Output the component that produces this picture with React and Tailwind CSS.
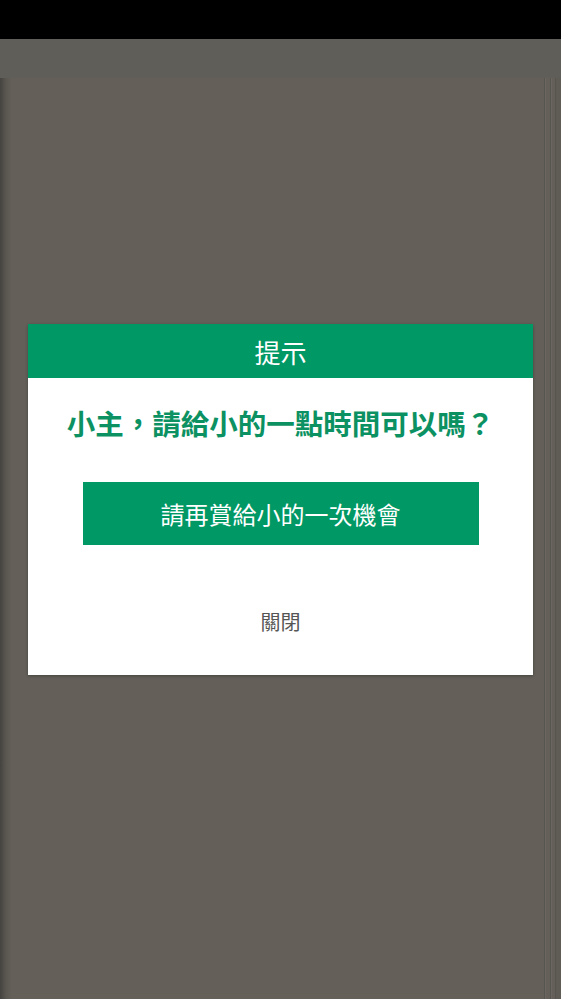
import React from 'react';

const cjk = { fontFamily: '"Noto Sans CJK TC", "Noto Sans CJK SC", "Noto Sans", sans-serif' };

export default function App() {
  return (
    <div className="relative h-[999px] w-full overflow-hidden bg-[#646059]" style={cjk}>
      {/* status bar */}
      <div className="h-[39px] bg-black" />
      {/* top bar */}
      <div className="h-[39px] bg-[#605e59]" />
      {/* page behind the dialog */}
      <div className="flex h-[921px]">
        <div className="w-[12px] bg-gradient-to-r from-[#45433f] via-[#5a5751] to-[#646059]" />
        <div className="flex-1" />
        <div className="flex w-[17px]">
          <div className="w-[1px] bg-[#57554f]" />
          <div className="w-[1px] bg-[#6b6760]" />
          <div className="w-[4px]" />
          <div className="w-[1px] bg-[#57554f]" />
          <div className="w-[1px] bg-[#6b6760]" />
          <div className="w-[3px]" />
          <div className="w-[1px] bg-[#57554f]" />
          <div className="flex-1 bg-[#5f5c56]" />
        </div>
      </div>

      {/* dialog */}
      <div className="absolute inset-0 flex items-center justify-center">
        <div className="w-[505px] bg-white shadow-[0_1px_3px_rgba(0,0,0,0.3)]">
          <div className="flex h-[54px] items-center justify-center bg-[#009865] text-[26px] text-white">
            提示
          </div>
          <div className="flex flex-col items-center pt-[28px] pb-[28px]">
            <div className="text-[28.5px] font-bold leading-[34px] text-[#0b9162]">
              小主，請給小的一點時間可以嗎？
            </div>
            <button className="mt-[42px] flex h-[63px] w-[396px] items-center justify-center bg-[#009865] text-[24px] text-white">
              請再賞給小的一次機會
            </button>
            <div className="mt-[52px] flex h-[50px] items-center text-[20px] text-[#555555]">
              關閉
            </div>
          </div>
        </div>
      </div>
    </div>
  );
}
